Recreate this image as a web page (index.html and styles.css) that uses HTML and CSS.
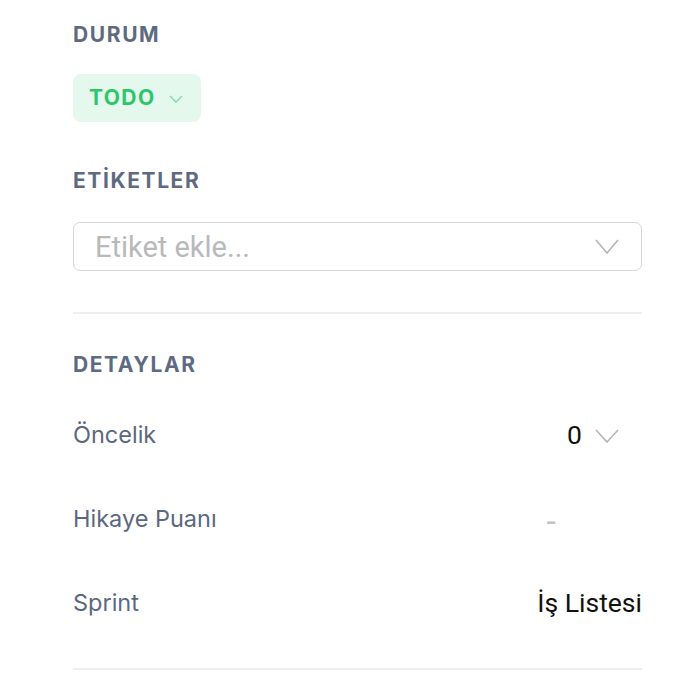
FILE: index.html
```html
<!DOCTYPE html>
<html lang="tr">
<head>
<meta charset="utf-8">
<title>Detaylar</title>
<link rel="stylesheet" href="styles.css">
</head>
<body>
<div class="panel">
  <section class="block">
    <h3 class="section-title">DURUM</h3>
    <button class="status-badge">
      <span class="status-text">TODO</span>
      <svg class="chev-small" width="14" height="8" viewBox="0 0 14 8"><path d="M1 1 L7 7 L13 1" fill="none" stroke="#7fd9a4" stroke-width="1.3"/></svg>
    </button>
  </section>

  <section class="block block-tags">
    <h3 class="section-title">ETİKETLER</h3>
    <div class="select-input">
      <span class="placeholder">Etiket ekle...</span>
      <svg class="chev-big" width="24" height="15" viewBox="0 0 24 15"><path d="M1 1 L12 14 L23 1" fill="none" stroke="#b5b5b5" stroke-width="1.6"/></svg>
    </div>
  </section>

  <hr class="divider divider-top">

  <section class="block block-details">
    <h3 class="section-title">DETAYLAR</h3>
    <div class="detail-row">
      <span class="detail-label">Öncelik</span>
      <span class="detail-value value-priority">0
        <svg class="chev-big" width="24" height="14" viewBox="0 0 24 14"><path d="M1 1 L12 13 L23 1" fill="none" stroke="#b5b5b5" stroke-width="1.6"/></svg>
      </span>
    </div>
    <div class="detail-row">
      <span class="detail-label">Hikaye Puanı</span>
      <span class="detail-value value-empty">-</span>
    </div>
    <div class="detail-row">
      <span class="detail-label">Sprint</span>
      <span class="detail-value">İş Listesi</span>
    </div>
  </section>

  <hr class="divider divider-bottom">
</div>
</body>
</html>
```

FILE: styles.css
```css
* { box-sizing: border-box; }
html, body { margin: 0; padding: 0; background: #ffffff; }
body { font-family: Inter, "Noto Sans", sans-serif; }

.panel {
  width: 569px;
  margin-left: 73px;
  padding-top: 24px;
}

.block { display: flex; flex-direction: column; align-items: flex-start; }

.section-title {
  margin: 0;
  font-size: 21px;
  line-height: 22px;
  font-weight: 700;
  letter-spacing: 1.6px;
  color: #5e6a82;
}

.status-badge {
  margin-top: 28px;
  width: 128px;
  height: 48px;
  border: none;
  border-radius: 8px;
  background: #e5f8ee;
  display: flex;
  align-items: center;
  padding: 0 0 0 16px;
  gap: 14px;
  font-family: Inter, sans-serif;
}
.status-text {
  font-size: 21px;
  font-weight: 700;
  letter-spacing: 1.4px;
  color: #2dc66b;
  line-height: 22px;
}
.chev-small { display: block; margin-top: 1px; }

.block-tags { margin-top: 48px; }
.select-input {
  margin-top: 30px;
  width: 100%;
  height: 49px;
  border: 1.5px solid #d7d7d9;
  border-radius: 7px;
  display: flex;
  align-items: center;
  justify-content: space-between;
  padding: 0 22px 0 21px;
}
.placeholder {
  font-family: Roboto, "Liberation Sans", sans-serif;
  font-size: 29px;
  color: #b9b9bb;
  line-height: 30px;
}
.chev-big { display: block; }

.divider {
  border: none;
  height: 2px;
  background: #eeeff1;
  margin: 0;
}
.divider-top { margin-top: 41px; }

.block-details { margin-top: 40px; align-items: stretch; }
.block-details .section-title { margin-bottom: 17px; }

.detail-row {
  height: 84px;
  display: flex;
  align-items: center;
  justify-content: space-between;
}
.detail-label {
  font-size: 23.5px;
  line-height: 26px;
  color: #5b6881;
}
.detail-value {
  font-family: Roboto, "Liberation Sans", sans-serif;
  font-size: 26.5px;
  line-height: 28px;
  color: #111111;
  display: flex;
  align-items: center;
}
.value-priority { gap: 13px; margin-right: 23px; }
.value-priority .chev-big { margin-top: 2px; }
.value-empty { color: #c4c4c6; margin-right: 86px; font-size: 34px; margin-top: 4px; }

.divider-bottom { margin-top: 23px; }
```
